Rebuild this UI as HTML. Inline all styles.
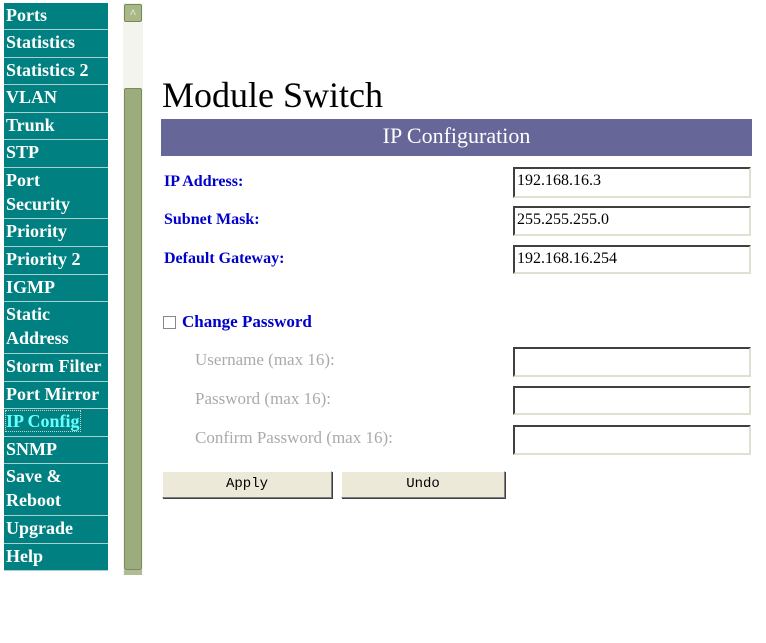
<!DOCTYPE html>
<html><head><style>
body{margin:0;width:766px;height:643px;background:#fff;position:relative;overflow:hidden;font-family:"Liberation Serif",serif}
.m{position:absolute;left:4px;width:104px;background:#008080;color:#fff;font-weight:bold;font-size:18px;line-height:24px;padding-left:2px;box-sizing:border-box;border-bottom:1px solid #a8d0d0;overflow:hidden;white-space:nowrap}
.a{position:absolute;}
.lbl{position:absolute;left:164px;color:#0000cc;font-weight:bold;font-size:16px}
.g{position:absolute;left:195px;color:#aaa;font-size:17px}
.in{position:absolute;left:513px;width:238px;box-sizing:border-box;border:2px solid;border-color:#404040 #e0e0d0 #e0e0d0 #404040;background:#fff;font-size:16px;padding:3px 2px 0}
.b{position:absolute;top:471px;height:27px;background:#ece9d8;border:1px solid;border-color:#fff #808080 #808080 #fff;box-shadow:1px 1px 0 #404040;box-sizing:border-box;text-align:center;font-size:14px;line-height:24px;font-family:"Liberation Mono",monospace}
</style></head><body>
<div class="m" style="top:3px;height:27px">Ports</div>
<div class="m" style="top:30px;height:28px">Statistics</div>
<div class="m" style="top:58px;height:27px">Statistics 2</div>
<div class="m" style="top:85px;height:28px">VLAN</div>
<div class="m" style="top:113px;height:27px">Trunk</div>
<div class="m" style="top:140px;height:28px">STP</div>
<div class="m" style="top:168px;height:51px">Port<br>Security</div>
<div class="m" style="top:219px;height:28px">Priority</div>
<div class="m" style="top:247px;height:28px">Priority 2</div>
<div class="m" style="top:275px;height:27px">IGMP</div>
<div class="m" style="top:302px;height:52px">Static<br>Address</div>
<div class="m" style="top:354px;height:28px">Storm Filter</div>
<div class="m" style="top:382px;height:27px">Port Mirror</div>
<div class="m" style="top:409px;height:28px;color:#66ffff"><span style="outline:1px dotted #ccc">IP Config</span></div>
<div class="m" style="top:437px;height:27px">SNMP</div>
<div class="m" style="top:464px;height:52px">Save &amp;<br>Reboot</div>
<div class="m" style="top:516px;height:28px">Upgrade</div>
<div class="m" style="top:544px;height:27px">Help</div>

<div class="a" style="left:123px;top:3px;width:20px;height:572px;background:#f4f4ee"></div>
<div class="a" style="left:124px;top:4px;width:18px;height:18px;background:#a8b888;border:1px solid #788858;box-sizing:border-box;border-radius:2px;color:#fff;font-size:12px;text-align:center;line-height:16px">^</div>
<div class="a" style="left:124px;top:88px;width:18px;height:482px;background:#9cac7c;border:1px solid #7a8a5a;box-sizing:border-box;border-radius:2px"></div>
<div class="a" style="left:124px;top:570px;width:18px;height:5px;background:#b0bc94"></div>

<div class="a" style="left:162px;top:74px;font-size:36px;color:#000">Module Switch</div>
<div class="a" style="left:161px;top:119px;width:591px;height:37px;background:#666699;color:#fff;font-size:22px;text-align:center;line-height:34px">IP Configuration</div>

<div class="lbl" style="top:173px">IP Address:</div>
<div class="lbl" style="top:211px">Subnet Mask:</div>
<div class="lbl" style="top:250px">Default Gateway:</div>
<div class="in" style="top:167px;height:31px">192.168.16.3</div>
<div class="in" style="top:206px;height:30px">255.255.255.0</div>
<div class="in" style="top:245px;height:29px">192.168.16.254</div>

<div class="a" style="left:163px;top:316px;width:13px;height:13px;border:1px solid #888;box-sizing:border-box;background:#fff"></div>
<div class="a" style="left:182px;top:312px;color:#0000cc;font-weight:bold;font-size:17px">Change Password</div>
<div class="g" style="top:350px">Username (max 16):</div>
<div class="g" style="top:389px">Password (max 16):</div>
<div class="g" style="top:428px">Confirm Password (max 16):</div>
<div class="in" style="top:347px;height:30px"></div>
<div class="in" style="top:386px;height:29px"></div>
<div class="in" style="top:425px;height:30px"></div>

<div class="b" style="left:162px;width:170px">Apply</div>
<div class="b" style="left:341px;width:164px">Undo</div>
</body></html>
